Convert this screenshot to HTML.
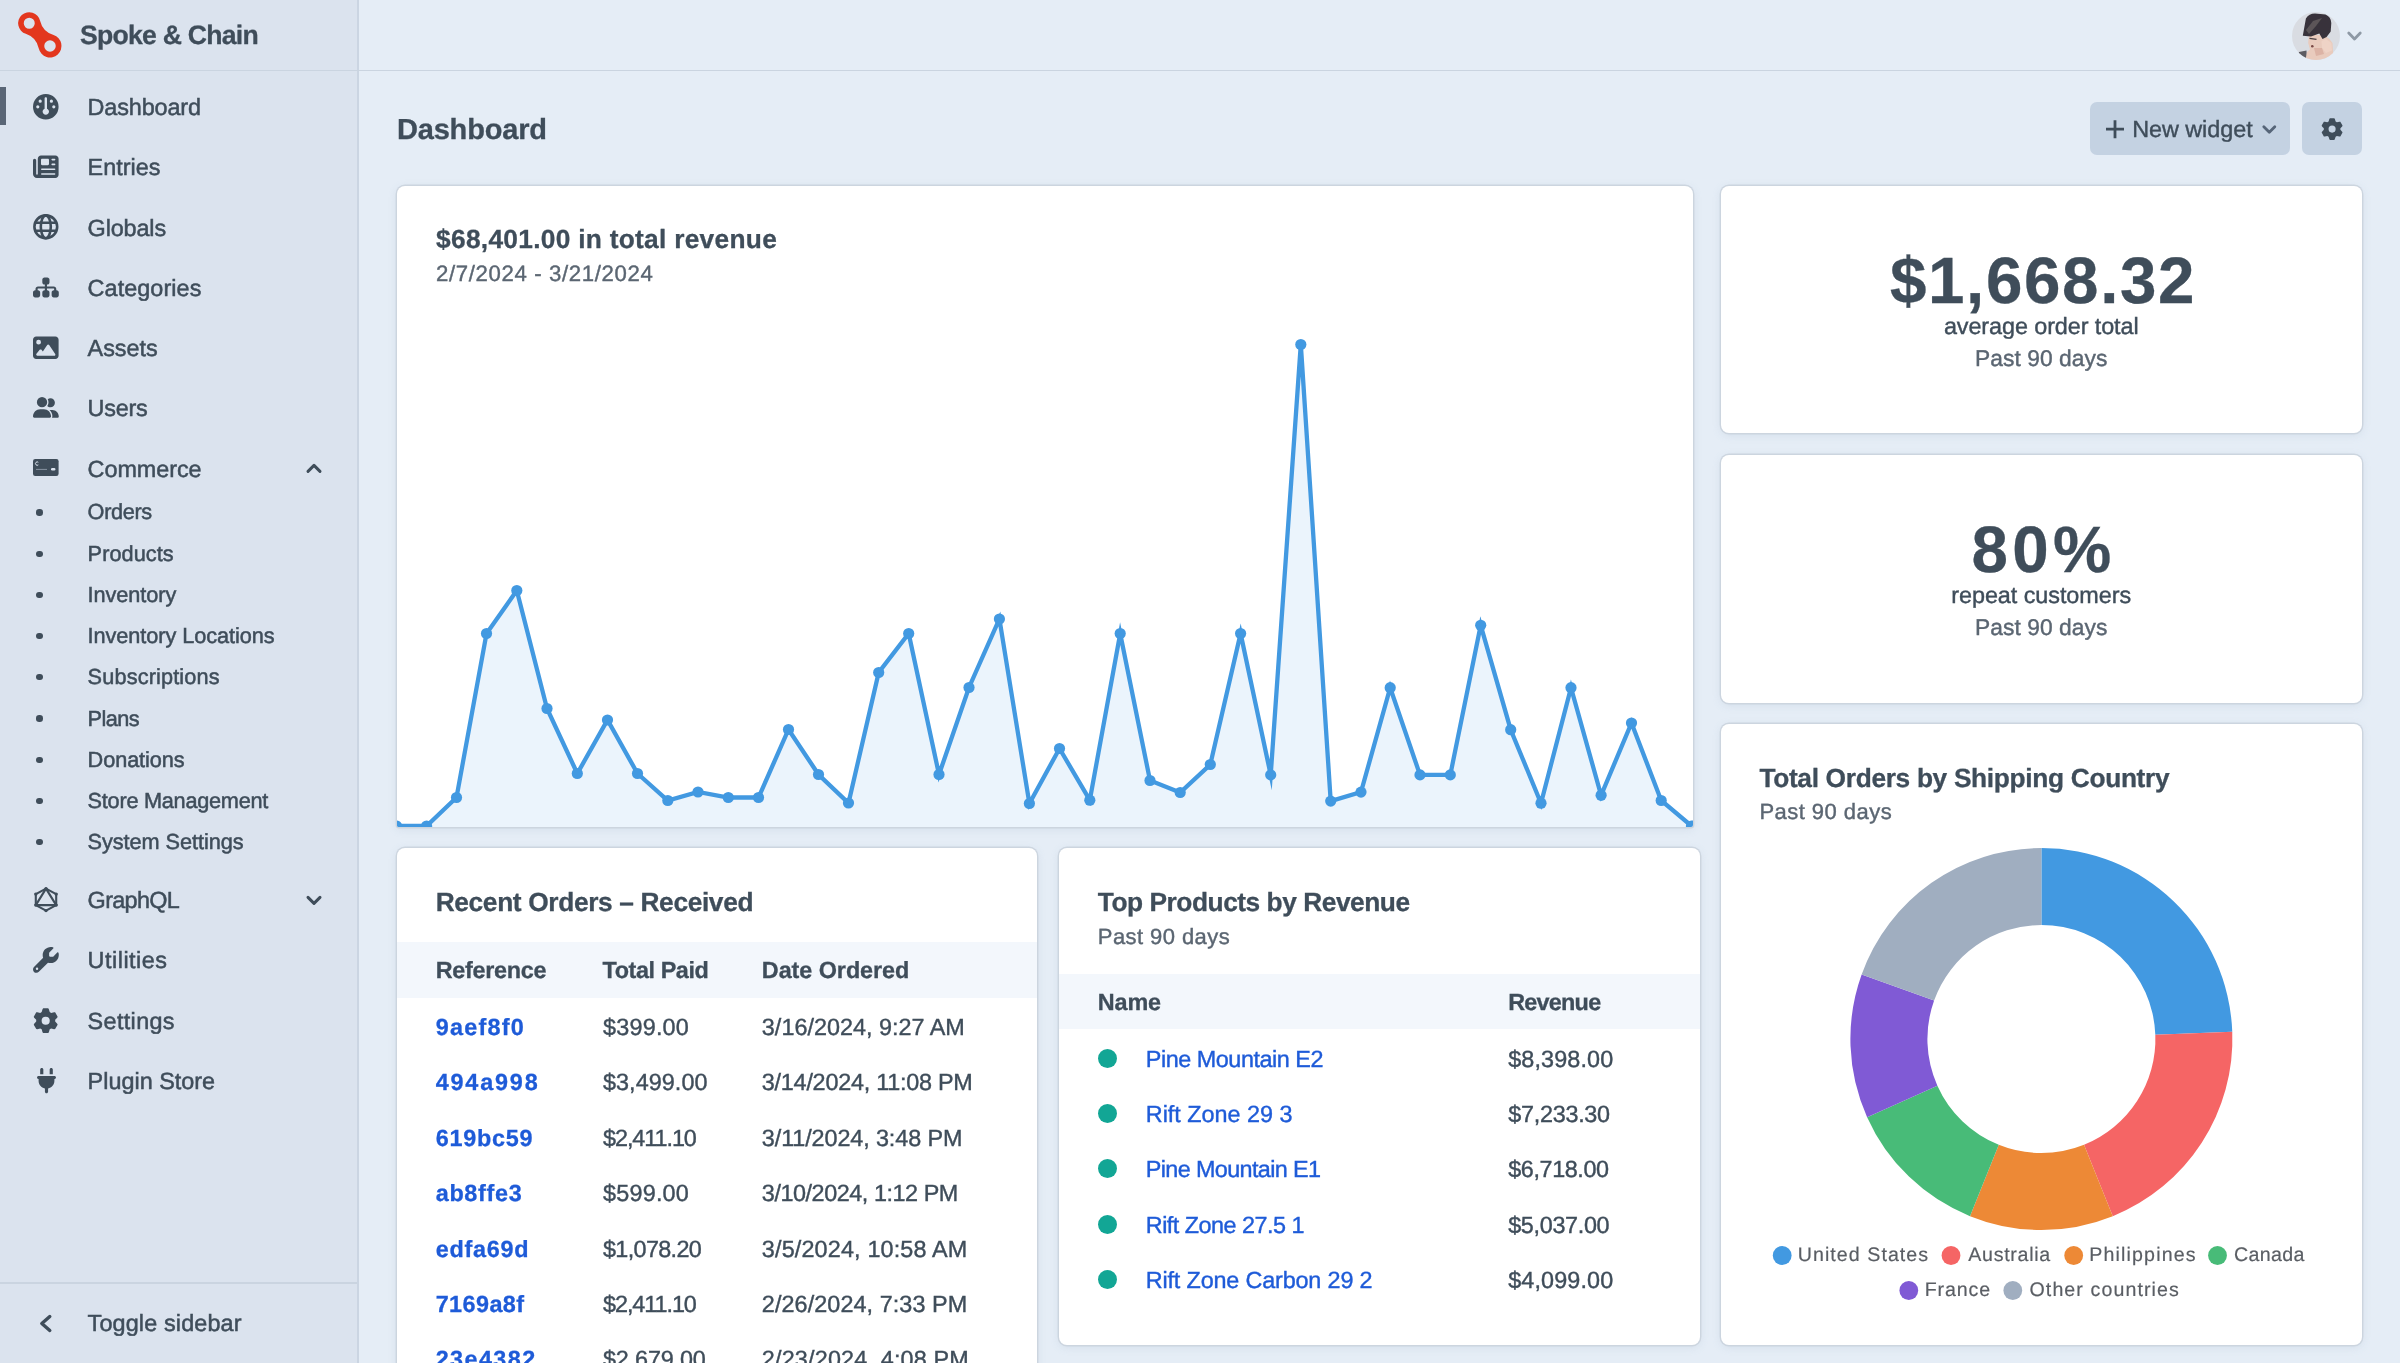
<!DOCTYPE html>
<html><head><meta charset="utf-8"><title>Dashboard - Spoke &amp; Chain</title>
<style>
html,body{margin:0;padding:0}
html{width:2400px;height:1363px;overflow:hidden}
body{width:2400px;height:1363px;overflow:hidden;position:relative;background:#e5edf6;font-family:"Liberation Sans",sans-serif;color:#3f4d5a}
.t{position:absolute;white-space:pre;font-family:"Liberation Sans",sans-serif;text-rendering:geometricPrecision}
.tl{position:absolute;left:0;top:0;width:2400px;height:1363px;will-change:transform}
.sb{position:absolute;left:0;top:0;width:357px;height:1363px;background:#dbe3ee;border-right:2px solid #cbd5e2}
.hl{position:absolute;left:0;top:69.6px;width:2400px;height:1.6px;background:#cad4e0}
.btn{position:absolute;background:#c4d2e2;border-radius:7px}
svg{overflow:visible}
.root{position:absolute;left:0;top:0;width:2400px;height:1363px;overflow:hidden;background:#e5edf6}
</style></head><body>
<div class="root">
<div class="sb"></div>
<div class="hl"></div>
<div style="position:absolute;left:0;top:1282px;width:357px;height:1.6px;background:#cad4e0"></div>
<div style="position:absolute;left:0;top:87.2px;width:6.1px;height:37.8px;background:#5a6676"></div>
<svg style="position:absolute;left:10px;top:0" width="60" height="68" viewBox="10 0 60 68"><path fill="#e3371e" fill-rule="evenodd" d="M25.80 33.80Q36.55 37.43 38.79 48.56A11.5 11.5 0 1 0 53.58 35.07Q42.70 31.82 40.07 20.78A11.1 11.1 0 1 0 25.80 33.80ZM23.75 23.25a5.5 5.5 0 1 0 11 0a5.5 5.5 0 1 0 -11 0ZM44.25 46.0a5.75 5.75 0 1 0 11.5 0a5.75 5.75 0 1 0 -11.5 0Z"/></svg>
<svg style="position:absolute;left:33.20px;top:93.60px" width="25.60" height="25.60" viewBox="0 0 512 512"><path fill="#3f4d5a" fill-rule="nonzero" d="M0 256a256 256 0 1 1 512 0A256 256 0 1 1 0 256zM320 352c0-26.9-16.5-49.9-40-59.3V88c0-13.3-10.7-24-24-24s-24 10.7-24 24V292.700c-23.500 9.500-40 32.500-40 59.300c0 35.300 28.700 64 64 64s64-28.700 64-64zM144 176a32 32 0 1 0 0-64 32 32 0 1 0 0 64zm-16 80a32 32 0 1 0 -64 0 32 32 0 1 0 64 0zm288 32a32 32 0 1 0 0-64 32 32 0 1 0 0 64zM400 144a32 32 0 1 0 -64 0 32 32 0 1 0 64 0z"/></svg><svg style="position:absolute;left:33.20px;top:153.80px" width="25.60" height="25.60" viewBox="0 0 512 512"><path fill="#3f4d5a" fill-rule="nonzero" d="M96 96c0-35.3 28.7-64 64-64H448c35.300 0 64 28.700 64 64V416c0 35.300-28.700 64-64 64H80c-44.200 0-80-35.800-80-80V128c0-17.700 14.300-32 32-32s32 14.300 32 32V400c0 8.800 7.200 16 16 16s16-7.200 16-16V96zm64 24v80c0 13.300 10.700 24 24 24H296c13.300 0 24-10.700 24-24V120c0-13.300-10.700-24-24-24H184c-13.300 0-24 10.700-24 24zm208-8c0 8.800 7.200 16 16 16h48c8.800 0 16-7.200 16-16s-7.200-16-16-16H384c-8.800 0-16 7.200-16 16zm0 96c0 8.800 7.200 16 16 16h48c8.800 0 16-7.200 16-16s-7.200-16-16-16H384c-8.800 0-16 7.200-16 16zM160 304c0 8.800 7.200 16 16 16H432c8.800 0 16-7.200 16-16s-7.200-16-16-16H176c-8.800 0-16 7.200-16 16zm0 96c0 8.800 7.200 16 16 16H432c8.800 0 16-7.200 16-16s-7.200-16-16-16H176c-8.800 0-16 7.200-16 16z"/></svg><svg style="position:absolute;left:33.2px;top:213.89999999999998px" width="25.6" height="25.6" viewBox="0 0 512 512" fill="none" stroke="#3f4d5a" stroke-width="52"><circle cx="256" cy="256" r="228"/><ellipse cx="256" cy="256" rx="100" ry="228"/><path d="M40 176H472M40 336H472"/></svg><svg style="position:absolute;left:33.10px;top:275.83px" width="25.80" height="22.93" viewBox="0 0 576 512"><path fill="#3f4d5a" fill-rule="nonzero" d="M208 80c0-26.500 21.500-48 48-48h64c26.500 0 48 21.500 48 48v64c0 26.500-21.500 48-48 48h-8v40H464c30.900 0 56 25.100 56 56v32h8c26.500 0 48 21.500 48 48v64c0 26.500-21.500 48-48 48H464c-26.500 0-48-21.500-48-48V368c0-26.500 21.500-48 48-48h8V288c0-4.400-3.600-8-8-8H312v40h8c26.500 0 48 21.500 48 48v64c0 26.500-21.500 48-48 48H256c-26.500 0-48-21.500-48-48V368c0-26.500 21.500-48 48-48h8V280H112c-4.400 0-8 3.600-8 8v32h8c26.500 0 48 21.500 48 48v64c0 26.500-21.500 48-48 48H48c-26.500 0-48-21.500-48-48V368c0-26.500 21.500-48 48-48h8V288c0-30.900 25.100-56 56-56H264V192h-8c-26.500 0-48-21.500-48-48V80z"/></svg><svg style="position:absolute;left:33.20px;top:334.60px" width="25.60" height="25.60" viewBox="0 0 512 512"><path fill="#3f4d5a" fill-rule="nonzero" d="M0 96C0 60.700 28.700 32 64 32H448c35.300 0 64 28.700 64 64V416c0 35.300-28.700 64-64 64H64c-35.300 0-64-28.700-64-64V96zM323.800 202.500c-4.500-6.600-11.900-10.500-19.800-10.500s-15.400 3.900-19.800 10.500l-87 127.600L170.700 297c-4.600-5.700-11.500-9-18.700-9s-14.200 3.300-18.700 9l-64 80c-5.800 7.200-6.900 17.100-2.900 25.400s12.400 13.600 21.600 13.600h96 32H424c8.900 0 17.100-4.900 21.200-12.800s3.600-17.400-1.400-24.700l-120-176zM112 192a48 48 0 1 0 0-96 48 48 0 1 0 0 96z"/></svg><svg style="position:absolute;left:33.10px;top:397.28px" width="25.80" height="20.64" viewBox="0 0 640 512"><path fill="#3f4d5a" fill-rule="nonzero" d="M96 128a128 128 0 1 1 256 0A128 128 0 1 1 96 128zM0 482.300C0 383.800 79.800 304 178.300 304h91.400C368.200 304 448 383.800 448 482.300c0 16.400-13.300 29.700-29.700 29.700H29.700C13.300 512 0 498.700 0 482.300zM609.300 512H471.400c5.400-9.400 8.600-20.300 8.600-32v-8c0-60.700-27.100-115.200-69.800-151.800c2.400-.1 4.700-.2 7.100-.2h61.400C567.800 320 640 392.200 640 481.300c0 17-13.800 30.700-30.700 30.700zM432 256c-31 0-59-12.600-79.300-32.900C372.400 196.500 384 163.600 384 128c0-26.800-6.600-52.100-18.300-74.300C384.300 40.100 407.200 32 432 32c61.900 0 112 50.100 112 112s-50.100 112-112 112z"/></svg><svg style="position:absolute;left:33.3px;top:459.4px" width="25.6" height="17" viewBox="0 0 25.6 17"><rect width="25.6" height="17" rx="2.2" fill="#3f4d5a"/><path d="M5.3 3.3a1.7 1.7 0 1 0 0 2.6" fill="none" stroke="#dbe3ee" stroke-width="1"/><rect x="3" y="9.9" width="11" height="1" fill="#8793a0"/><rect x="18" y="8.9" width="4.4" height="2.6" rx="1.2" fill="#dbe3ee"/></svg><svg style="position:absolute;left:0;top:0" width="100" height="1000" viewBox="0 0 100 1000"><g fill="none" stroke="#3f4d5a" stroke-width="2.1" stroke-linejoin="round"><polygon points="46.0,888.6 56.2,894.1 56.2,905.1 46.0,910.6 35.8,905.1 35.8,894.1"/><polygon points="46.0,888.6 56.2,905.1 35.8,905.1"/></g><g fill="#3f4d5a"><circle cx="46.0" cy="888.6" r="1.7"/><circle cx="56.2" cy="894.1" r="1.7"/><circle cx="56.2" cy="905.1" r="1.7"/><circle cx="46.0" cy="910.6" r="1.7"/><circle cx="35.8" cy="905.1" r="1.7"/><circle cx="35.8" cy="894.1" r="1.7"/></g></svg><svg style="position:absolute;left:33.10px;top:947.30px" width="25.80" height="25.80" viewBox="0 0 512 512"><path fill="#3f4d5a" fill-rule="evenodd" d="M352 320c88.4 0 160-71.6 160-160c0-15.3-2.2-30.1-6.200-44.200c-3.100-10.800-16.400-13.200-24.300-5.300l-76.800 76.800c-3 3-7.100 4.700-11.300 4.700H336c-8.800 0-16-7.200-16-16V118.600c0-4.200 1.700-8.300 4.700-11.300l76.800-76.800c7.900-7.900 5.400-21.200-5.300-24.300C382.100 2.200 367.300 0 352 0C263.600 0 192 71.600 192 160c0 19.100 3.400 37.500 9.500 54.500L19.900 396.100C7.200 408.800 0 426.100 0 444.100C0 481.600 30.400 512 67.900 512c18 0 35.300-7.200 48-19.900L297.500 310.500c17 6.200 35.400 9.500 54.500 9.500zM80 408a24 24 0 1 1 0 48 24 24 0 1 1 0-48z"/></svg><svg style="position:absolute;left:33.30px;top:1007.60px" width="25.40" height="25.40" viewBox="0 0 512 512"><path fill="#3f4d5a" fill-rule="evenodd" d="M174.9 82.0 L191.9 24.7 L205.4 7.1 L306.6 7.1 L320.1 24.7 L337.1 82.0 L366.1 98.7 L424.2 84.8 L446.2 87.7 L496.9 175.4 L488.4 195.9 L447.3 239.3 L447.3 272.7 L488.4 316.1 L496.9 336.6 L446.2 424.3 L424.2 427.2 L366.1 413.3 L337.1 430.0 L320.1 487.3 L306.6 504.9 L205.4 504.9 L191.9 487.3 L174.9 430.0 L145.9 413.3 L87.8 427.2 L65.8 424.3 L15.1 336.6 L23.6 316.1 L64.7 272.7 L64.7 239.3 L23.6 195.9 L15.1 175.4 L65.8 87.7 L87.8 84.8 L145.9 98.7Z M174 256a82 82 0 1 0 164 0a82 82 0 1 0 -164 0z"/></svg><svg style="position:absolute;left:36.50px;top:1067.90px" width="19.00" height="25.30" viewBox="0 0 384 512"><path fill="#3f4d5a" fill-rule="nonzero" d="M96 0C78.300 0 64 14.300 64 32v96h64V32c0-17.700-14.300-32-32-32zM288 0c-17.700 0-32 14.300-32 32v96h64V32c0-17.700-14.300-32-32-32zM32 160c-17.700 0-32 14.300-32 32s14.300 32 32 32v32c0 77.400 55 142 128 156.800V480c0 17.700 14.300 32 32 32s32-14.300 32-32V412.800C297 398 352 333.400 352 256V224c17.700 0 32-14.300 32-32s-14.300-32-32-32H32z"/></svg><div style="position:absolute;left:36.4px;top:509.3px;width:6.4px;height:6.4px;border-radius:50%;background:#3f4d5a"></div><div style="position:absolute;left:36.4px;top:550.5px;width:6.4px;height:6.4px;border-radius:50%;background:#3f4d5a"></div><div style="position:absolute;left:36.4px;top:591.7px;width:6.4px;height:6.4px;border-radius:50%;background:#3f4d5a"></div><div style="position:absolute;left:36.4px;top:632.9px;width:6.4px;height:6.4px;border-radius:50%;background:#3f4d5a"></div><div style="position:absolute;left:36.4px;top:674.1px;width:6.4px;height:6.4px;border-radius:50%;background:#3f4d5a"></div><div style="position:absolute;left:36.4px;top:715.3px;width:6.4px;height:6.4px;border-radius:50%;background:#3f4d5a"></div><div style="position:absolute;left:36.4px;top:756.5px;width:6.4px;height:6.4px;border-radius:50%;background:#3f4d5a"></div><div style="position:absolute;left:36.4px;top:797.7px;width:6.4px;height:6.4px;border-radius:50%;background:#3f4d5a"></div><div style="position:absolute;left:36.4px;top:838.9px;width:6.4px;height:6.4px;border-radius:50%;background:#3f4d5a"></div>
<svg style="position:absolute;left:2292px;top:11.5px" width="48" height="48" viewBox="0 0 48 48"><defs><clipPath id="av"><circle cx="24" cy="24" r="24"/></clipPath><filter id="avb" x="-10%" y="-10%" width="120%" height="120%"><feGaussianBlur stdDeviation="0.7"/></filter></defs><g clip-path="url(#av)"><rect width="48" height="48" fill="#d9dce2"/><g filter="url(#avb)"><path d="M7 40L14.500 38.500L15 48H4Z" fill="#5d5c62"/><path d="M16.800 23L16.200 31L18 37.500L15 40L13.500 48H41V40L40.500 31L37 26.500L31 23Z" fill="#e9cbbd"/><path d="M29.500 29L34 27L39.500 31L40 38.500L34 41L30 36Z" fill="#efd3c6"/><path d="M22 36L30 36L32 42L24 44Z" fill="#dcb3a5"/><path d="M10.800 23.700L13.900 6.500Q17 1.600 23 1.500L33.500 2.600Q39 5 39.300 11L38.700 19.500L34.600 25L30.500 27L27.300 21.400L19 24.500Z" fill="#37333a"/><path d="M14 18L21 9L30 6L24 14L17 22Z" fill="#5b5559"/><path d="M17.500 26.300L24.500 27.300" stroke="#4a3f42" stroke-width="1.3" fill="none"/><circle cx="20.300" cy="34.200" r="1.300" fill="#7a4a45"/></g></g></svg>
<div class="btn" style="left:2090px;top:102px;width:200px;height:53px"></div>
<div class="btn" style="left:2302px;top:102px;width:60px;height:53px"></div>
<svg style="position:absolute;left:2320.80px;top:117.90px" width="22.20" height="22.20" viewBox="0 0 512 512"><path fill="#3f4d5a" fill-rule="evenodd" d="M174.9 82.0 L191.9 24.7 L205.4 7.1 L306.6 7.1 L320.1 24.7 L337.1 82.0 L366.1 98.7 L424.2 84.8 L446.2 87.7 L496.9 175.4 L488.4 195.9 L447.3 239.3 L447.3 272.7 L488.4 316.1 L496.9 336.6 L446.2 424.3 L424.2 427.2 L366.1 413.3 L337.1 430.0 L320.1 487.3 L306.6 504.9 L205.4 504.9 L191.9 487.3 L174.9 430.0 L145.9 413.3 L87.8 427.2 L65.8 424.3 L15.1 336.6 L23.6 316.1 L64.7 272.7 L64.7 239.3 L23.6 195.9 L15.1 175.4 L65.8 87.7 L87.8 84.8 L145.9 98.7Z M174 256a82 82 0 1 0 164 0a82 82 0 1 0 -164 0z"/></svg>
<div style="position:absolute;background:#fff;border-radius:8px;box-shadow:0 0 0 1.4px #ccd5df,0 2px 9px rgba(150,170,195,.24);left:397px;top:185.5px;width:1296px;height:641.0px;overflow:hidden;border-radius:8px 8px 2px 2px;"><svg style="position:absolute;left:0;top:0" width="1296" height="641" viewBox="0 0 1296 641"><path d="M-0.5 640.0 L29.6 640.0 L59.5 611.5 L89.5 447.5 L119.8 404.5 L150.0 522.5 L180.3 587.5 L210.5 534.0 L240.5 587.5 L270.8 614.5 L301.0 606.0 L331.3 611.5 L361.5 611.5 L391.5 543.5 L421.5 588.5 L451.5 617.0 L481.7 486.5 L511.7 447.5 L542.0 588.5 L572.0 501.5 L602.4 433.0 L632.4 617.5 L662.5 562.5 L692.8 614.2 L723.2 447.5 L753.0 594.5 L783.2 606.5 L813.3 578.5 L843.6 447.5 L873.7 588.9 L903.8 158.5 L933.7 615.1 L964.0 606.1 L993.2 501.7 L1023.0 588.9 L1053.3 588.9 L1083.7 439.3 L1113.7 543.7 L1144.0 617.2 L1174.0 501.7 L1204.1 609.3 L1234.5 537.0 L1264.2 614.5 L1294.5 640.0 L1294.5 641 L-0.5 641Z" fill="#ebf4fc"/><path d="M-0.5 640.0 L29.6 640.0 L59.5 611.5 L89.5 447.5 L119.8 404.5 L150.0 522.5 L180.3 587.5 L210.5 534.0 L240.5 587.5 L270.8 614.5 L301.0 606.0 L331.3 611.5 L361.5 611.5 L391.5 543.5 L421.5 588.5 L451.5 617.0 L481.7 486.5 L511.7 447.5 L542.0 588.5 L572.0 501.5 L602.4 433.0 L632.4 617.5 L662.5 562.5 L692.8 614.2 L723.2 447.5 L753.0 594.5 L783.2 606.5 L813.3 578.5 L843.6 447.5 L873.7 588.9 L903.8 158.5 L933.7 615.1 L964.0 606.1 L993.2 501.7 L1023.0 588.9 L1053.3 588.9 L1083.7 439.3 L1113.7 543.7 L1144.0 617.2 L1174.0 501.7 L1204.1 609.3 L1234.5 537.0 L1264.2 614.5 L1294.5 640.0" fill="none" stroke="#4299e1" stroke-width="4.3" stroke-linejoin="miter" stroke-miterlimit="10"/><g fill="#4299e1"><circle cx="-0.5" cy="640.0" r="5.6"/><circle cx="29.6" cy="640.0" r="5.6"/><circle cx="59.5" cy="611.5" r="5.6"/><circle cx="89.5" cy="447.5" r="5.6"/><circle cx="119.8" cy="404.5" r="5.6"/><circle cx="150.0" cy="522.5" r="5.6"/><circle cx="180.3" cy="587.5" r="5.6"/><circle cx="210.5" cy="534.0" r="5.6"/><circle cx="240.5" cy="587.5" r="5.6"/><circle cx="270.8" cy="614.5" r="5.6"/><circle cx="301.0" cy="606.0" r="5.6"/><circle cx="331.3" cy="611.5" r="5.6"/><circle cx="361.5" cy="611.5" r="5.6"/><circle cx="391.5" cy="543.5" r="5.6"/><circle cx="421.5" cy="588.5" r="5.6"/><circle cx="451.5" cy="617.0" r="5.6"/><circle cx="481.7" cy="486.5" r="5.6"/><circle cx="511.7" cy="447.5" r="5.6"/><circle cx="542.0" cy="588.5" r="5.6"/><circle cx="572.0" cy="501.5" r="5.6"/><circle cx="602.4" cy="433.0" r="5.6"/><circle cx="632.4" cy="617.5" r="5.6"/><circle cx="662.5" cy="562.5" r="5.6"/><circle cx="692.8" cy="614.2" r="5.6"/><circle cx="723.2" cy="447.5" r="5.6"/><circle cx="753.0" cy="594.5" r="5.6"/><circle cx="783.2" cy="606.5" r="5.6"/><circle cx="813.3" cy="578.5" r="5.6"/><circle cx="843.6" cy="447.5" r="5.6"/><circle cx="873.7" cy="588.9" r="5.6"/><circle cx="903.8" cy="158.5" r="5.6"/><circle cx="933.7" cy="615.1" r="5.6"/><circle cx="964.0" cy="606.1" r="5.6"/><circle cx="993.2" cy="501.7" r="5.6"/><circle cx="1023.0" cy="588.9" r="5.6"/><circle cx="1053.3" cy="588.9" r="5.6"/><circle cx="1083.7" cy="439.3" r="5.6"/><circle cx="1113.7" cy="543.7" r="5.6"/><circle cx="1144.0" cy="617.2" r="5.6"/><circle cx="1174.0" cy="501.7" r="5.6"/><circle cx="1204.1" cy="609.3" r="5.6"/><circle cx="1234.5" cy="537.0" r="5.6"/><circle cx="1264.2" cy="614.5" r="5.6"/><circle cx="1294.5" cy="640.0" r="5.6"/></g></svg></div>
<div style="position:absolute;background:#fff;border-radius:8px;box-shadow:0 0 0 1.4px #ccd5df,0 2px 9px rgba(150,170,195,.24);left:1721px;top:185.5px;width:641px;height:247.7px;"></div>
<div style="position:absolute;background:#fff;border-radius:8px;box-shadow:0 0 0 1.4px #ccd5df,0 2px 9px rgba(150,170,195,.24);left:1721px;top:455px;width:641px;height:248.20000000000005px;"></div>
<div style="position:absolute;background:#fff;border-radius:8px;box-shadow:0 0 0 1.4px #ccd5df,0 2px 9px rgba(150,170,195,.24);left:1721px;top:724px;width:641px;height:620.8px;"></div>
<div style="position:absolute;background:#fff;border-radius:8px;box-shadow:0 0 0 1.4px #ccd5df,0 2px 9px rgba(150,170,195,.24);left:397px;top:848.4px;width:640.3px;height:551.6px;"><div style="position:absolute;left:0;top:93.4px;width:100%;height:55.8px;background:#f3f7fc"></div></div>
<div style="position:absolute;background:#fff;border-radius:8px;box-shadow:0 0 0 1.4px #ccd5df,0 2px 9px rgba(150,170,195,.24);left:1059px;top:848.4px;width:641.4000000000001px;height:496.4px;"><div style="position:absolute;left:0;top:125.8px;width:100%;height:55px;background:#f3f7fc"></div></div>
<svg style="position:absolute;left:1721px;top:724px" width="641" height="620" viewBox="1721 724 641 620"><path fill="#4299e1" d="M2041.40 848.00A191 191 0 0 1 2232.26 1031.68L2155.32 1034.63A114 114 0 0 0 2041.40 925.00Z"/><path fill="#f56565" d="M2232.26 1031.68A191 191 0 0 1 2112.80 1216.15L2084.02 1144.74A114 114 0 0 0 2155.32 1034.63Z"/><path fill="#ed8936" d="M2112.80 1216.15A191 191 0 0 1 1970.00 1216.15L1998.78 1144.74A114 114 0 0 0 2084.02 1144.74Z"/><path fill="#48bb78" d="M1970.00 1216.15A191 191 0 0 1 1867.11 1117.13L1937.37 1085.63A114 114 0 0 0 1998.78 1144.74Z"/><path fill="#805ad5" d="M1867.11 1117.13A191 191 0 0 1 1861.64 974.44L1934.11 1000.47A114 114 0 0 0 1937.37 1085.63Z"/><path fill="#a0aec0" d="M1861.64 974.44A191 191 0 0 1 2041.40 848.00L2041.40 925.00A114 114 0 0 0 1934.11 1000.47Z"/><circle cx="1782.2" cy="1255.5" r="9.4" fill="#4299e1"/><circle cx="1951" cy="1255.5" r="9.4" fill="#f56565"/><circle cx="2073.7" cy="1255.5" r="9.4" fill="#ed8936"/><circle cx="2217.5" cy="1255.5" r="9.4" fill="#48bb78"/><circle cx="1908.8" cy="1290.5" r="9.4" fill="#805ad5"/><circle cx="2012.8" cy="1290.5" r="9.4" fill="#a0aec0"/></svg>
<div style="position:absolute;left:1097.8px;top:1048.7px;width:19px;height:19px;border-radius:50%;background:#12a695"></div><div style="position:absolute;left:1097.8px;top:1104.0px;width:19px;height:19px;border-radius:50%;background:#12a695"></div><div style="position:absolute;left:1097.8px;top:1159.3px;width:19px;height:19px;border-radius:50%;background:#12a695"></div><div style="position:absolute;left:1097.8px;top:1214.6px;width:19px;height:19px;border-radius:50%;background:#12a695"></div><div style="position:absolute;left:1097.8px;top:1269.9px;width:19px;height:19px;border-radius:50%;background:#12a695"></div>
<svg style="position:absolute;left:0;top:0" width="2400" height="1363" viewBox="0 0 2400 1363"><path d="M308.0 471.4L314 465.4L320.0 471.4" fill="none" stroke="#3f4d5a" stroke-width="3.0" stroke-linecap="round" stroke-linejoin="round"/><path d="M308.0 897.4L314 903.4L320.0 897.4" fill="none" stroke="#3f4d5a" stroke-width="3.0" stroke-linecap="round" stroke-linejoin="round"/><path d="M49.8 1316.5L41.8 1323.5L49.8 1330.5" fill="none" stroke="#3f4d5a" stroke-width="3.4" stroke-linecap="round" stroke-linejoin="round"/><path d="M2348.75 33.0L2354.5 39.0L2360.25 33.0" fill="none" stroke="#8e99a5" stroke-width="2.8" stroke-linecap="round" stroke-linejoin="round"/><path d="M2263.8 126.85L2269.3 132.35L2274.8 126.85" fill="none" stroke="#566578" stroke-width="2.8" stroke-linecap="round" stroke-linejoin="round"/><path d="M2106 129.2H2124M2115 120.2V138.2" stroke="#3f4d5a" stroke-width="2.8" fill="none"/></svg>
<div class="tl"><span class="t" style="left:79.95px;top:22.20px;font-size:26.6px;line-height:26.6px;letter-spacing:-0.748px;color:#3f4d5a;font-weight:700;-webkit-text-stroke:0.3px currentColor">Spoke &amp; Chain</span><span class="t" style="left:87.61px;top:96.00px;font-size:23.4px;line-height:23.4px;letter-spacing:-0.130px;color:#3f4d5a;-webkit-text-stroke:0.5px currentColor">Dashboard</span><span class="t" style="left:87.61px;top:156.25px;font-size:23.4px;line-height:23.4px;letter-spacing:0.027px;color:#3f4d5a;-webkit-text-stroke:0.5px currentColor">Entries</span><span class="t" style="left:87.61px;top:216.50px;font-size:23.4px;line-height:23.4px;letter-spacing:-0.140px;color:#3f4d5a;-webkit-text-stroke:0.5px currentColor">Globals</span><span class="t" style="left:87.61px;top:276.75px;font-size:23.4px;line-height:23.4px;letter-spacing:0.067px;color:#3f4d5a;-webkit-text-stroke:0.5px currentColor">Categories</span><span class="t" style="left:87.61px;top:336.60px;font-size:23.4px;line-height:23.4px;letter-spacing:-0.022px;color:#3f4d5a;-webkit-text-stroke:0.5px currentColor">Assets</span><span class="t" style="left:87.61px;top:397.00px;font-size:23.4px;line-height:23.4px;letter-spacing:-0.250px;color:#3f4d5a;-webkit-text-stroke:0.5px currentColor">Users</span><span class="t" style="left:87.61px;top:457.60px;font-size:23.4px;line-height:23.4px;letter-spacing:-0.057px;color:#3f4d5a;-webkit-text-stroke:0.5px currentColor">Commerce</span><span class="t" style="left:87.61px;top:501.40px;font-size:21.7px;line-height:21.7px;letter-spacing:-0.337px;color:#3f4d5a;-webkit-text-stroke:0.5px currentColor">Orders</span><span class="t" style="left:87.61px;top:542.65px;font-size:21.7px;line-height:21.7px;letter-spacing:0.054px;color:#3f4d5a;-webkit-text-stroke:0.5px currentColor">Products</span><span class="t" style="left:87.61px;top:583.90px;font-size:21.7px;line-height:21.7px;letter-spacing:-0.073px;color:#3f4d5a;-webkit-text-stroke:0.5px currentColor">Inventory</span><span class="t" style="left:87.61px;top:625.15px;font-size:21.7px;line-height:21.7px;letter-spacing:-0.061px;color:#3f4d5a;-webkit-text-stroke:0.5px currentColor">Inventory Locations</span><span class="t" style="left:87.61px;top:666.40px;font-size:21.7px;line-height:21.7px;letter-spacing:0.148px;color:#3f4d5a;-webkit-text-stroke:0.5px currentColor">Subscriptions</span><span class="t" style="left:87.61px;top:707.65px;font-size:21.7px;line-height:21.7px;letter-spacing:-0.573px;color:#3f4d5a;-webkit-text-stroke:0.5px currentColor">Plans</span><span class="t" style="left:87.61px;top:748.90px;font-size:21.7px;line-height:21.7px;letter-spacing:-0.087px;color:#3f4d5a;-webkit-text-stroke:0.5px currentColor">Donations</span><span class="t" style="left:87.61px;top:790.15px;font-size:21.7px;line-height:21.7px;letter-spacing:-0.252px;color:#3f4d5a;-webkit-text-stroke:0.5px currentColor">Store Management</span><span class="t" style="left:87.61px;top:831.40px;font-size:21.7px;line-height:21.7px;letter-spacing:-0.052px;color:#3f4d5a;-webkit-text-stroke:0.5px currentColor">System Settings</span><span class="t" style="left:87.61px;top:888.80px;font-size:23.4px;line-height:23.4px;letter-spacing:-0.674px;color:#3f4d5a;-webkit-text-stroke:0.5px currentColor">GraphQL</span><span class="t" style="left:87.61px;top:949.40px;font-size:23.4px;line-height:23.4px;letter-spacing:0.506px;color:#3f4d5a;-webkit-text-stroke:0.5px currentColor">Utilities</span><span class="t" style="left:87.61px;top:1009.80px;font-size:23.4px;line-height:23.4px;letter-spacing:0.349px;color:#3f4d5a;-webkit-text-stroke:0.5px currentColor">Settings</span><span class="t" style="left:87.61px;top:1069.90px;font-size:23.4px;line-height:23.4px;letter-spacing:0.003px;color:#3f4d5a;-webkit-text-stroke:0.5px currentColor">Plugin Store</span><span class="t" style="left:87.61px;top:1312.25px;font-size:23.4px;line-height:23.4px;letter-spacing:0.136px;color:#3f4d5a;-webkit-text-stroke:0.5px currentColor">Toggle sidebar</span><span class="t" style="left:396.94px;top:116.25px;font-size:29.0px;line-height:29.0px;letter-spacing:-0.178px;color:#3f4d5a;font-weight:700;-webkit-text-stroke:0.3px currentColor">Dashboard</span><span class="t" style="left:2132.15px;top:118.00px;font-size:23.4px;line-height:23.4px;letter-spacing:-0.042px;color:#3f4d5a;-webkit-text-stroke:0.4px currentColor">New widget</span><span class="t" style="left:436.08px;top:226.30px;font-size:26.3px;line-height:26.3px;letter-spacing:0.285px;color:#3f4d5a;font-weight:700;-webkit-text-stroke:0.3px currentColor">$68,401.00 in total revenue</span><span class="t" style="left:436.08px;top:262.70px;font-size:22.2px;line-height:22.2px;letter-spacing:0.628px;color:#5b6672;-webkit-text-stroke:0.4px currentColor">2/7/2024 - 3/21/2024</span><span class="t" style="left:1889.95px;top:247.75px;font-size:65.5px;line-height:65.5px;letter-spacing:1.642px;color:#3f4d5a;font-weight:700;-webkit-text-stroke:0.3px currentColor">$1,668.32</span><span class="t" style="left:1943.95px;top:314.50px;font-size:23.4px;line-height:23.4px;letter-spacing:-0.094px;color:#3f4d5a;-webkit-text-stroke:0.4px currentColor">average order total</span><span class="t" style="left:1974.94px;top:346.75px;font-size:22.8px;line-height:22.8px;letter-spacing:0.068px;color:#5b6672;-webkit-text-stroke:0.4px currentColor">Past 90 days</span><span class="t" style="left:1971.40px;top:517.35px;font-size:65.5px;line-height:65.5px;letter-spacing:4.325px;color:#3f4d5a;font-weight:700;-webkit-text-stroke:0.3px currentColor">80%</span><span class="t" style="left:1951.28px;top:584.10px;font-size:23.4px;line-height:23.4px;letter-spacing:-0.056px;color:#3f4d5a;-webkit-text-stroke:0.4px currentColor">repeat customers</span><span class="t" style="left:1974.94px;top:616.35px;font-size:22.8px;line-height:22.8px;letter-spacing:0.068px;color:#5b6672;-webkit-text-stroke:0.4px currentColor">Past 90 days</span><span class="t" style="left:1759.40px;top:801.20px;font-size:22.0px;line-height:22.0px;letter-spacing:0.467px;color:#5b6672;-webkit-text-stroke:0.4px currentColor">Past 90 days</span><span class="t" style="left:1759.40px;top:764.70px;font-size:26.3px;line-height:26.3px;letter-spacing:-0.325px;color:#3f4d5a;font-weight:700;-webkit-text-stroke:0.3px currentColor">Total Orders by Shipping Country</span><span class="t" style="left:1797.78px;top:1246.30px;font-size:19.6px;line-height:19.6px;letter-spacing:1.061px;color:#5a5e64;-webkit-text-stroke:0.2px currentColor">United States</span><span class="t" style="left:1968.34px;top:1246.30px;font-size:19.6px;line-height:19.6px;letter-spacing:0.709px;color:#5a5e64;-webkit-text-stroke:0.2px currentColor">Australia</span><span class="t" style="left:2089.28px;top:1246.30px;font-size:19.6px;line-height:19.6px;letter-spacing:1.149px;color:#5a5e64;-webkit-text-stroke:0.2px currentColor">Philippines</span><span class="t" style="left:2234.12px;top:1246.30px;font-size:19.6px;line-height:19.6px;letter-spacing:0.337px;color:#5a5e64;-webkit-text-stroke:0.2px currentColor">Canada</span><span class="t" style="left:1924.70px;top:1281.10px;font-size:19.6px;line-height:19.6px;letter-spacing:0.899px;color:#5a5e64;-webkit-text-stroke:0.2px currentColor">France</span><span class="t" style="left:2029.50px;top:1281.10px;font-size:19.6px;line-height:19.6px;letter-spacing:1.096px;color:#5a5e64;-webkit-text-stroke:0.2px currentColor">Other countries</span><span class="t" style="left:435.70px;top:958.80px;font-size:23.4px;line-height:23.4px;letter-spacing:-0.278px;color:#3f4d5a;font-weight:700;-webkit-text-stroke:0.3px currentColor">Reference</span><span class="t" style="left:435.70px;top:889.40px;font-size:26.3px;line-height:26.3px;letter-spacing:-0.355px;color:#3f4d5a;font-weight:700;-webkit-text-stroke:0.3px currentColor">Recent Orders – Received</span><span class="t" style="left:602.50px;top:958.80px;font-size:23.4px;line-height:23.4px;letter-spacing:-0.415px;color:#3f4d5a;font-weight:700;-webkit-text-stroke:0.3px currentColor">Total Paid</span><span class="t" style="left:761.86px;top:958.80px;font-size:23.4px;line-height:23.4px;letter-spacing:-0.068px;color:#3f4d5a;font-weight:700;-webkit-text-stroke:0.3px currentColor">Date Ordered</span><span class="t" style="left:435.70px;top:1016.00px;font-size:23.4px;line-height:23.4px;letter-spacing:1.226px;color:#1e5bd8;font-weight:700;-webkit-text-stroke:0.3px currentColor">9aef8f0</span><span class="t" style="left:603.00px;top:1016.00px;font-size:23.4px;line-height:23.4px;letter-spacing:0.213px;color:#3f4d5a;-webkit-text-stroke:0.4px currentColor">$399.00</span><span class="t" style="left:761.86px;top:1016.00px;font-size:23.4px;line-height:23.4px;letter-spacing:0.005px;color:#3f4d5a;-webkit-text-stroke:0.4px currentColor">3/16/2024, 9:27 AM</span><span class="t" style="left:435.70px;top:1071.40px;font-size:23.4px;line-height:23.4px;letter-spacing:1.826px;color:#1e5bd8;font-weight:700;-webkit-text-stroke:0.3px currentColor">494a998</span><span class="t" style="left:603.00px;top:1071.40px;font-size:23.4px;line-height:23.4px;letter-spacing:0.050px;color:#3f4d5a;-webkit-text-stroke:0.4px currentColor">$3,499.00</span><span class="t" style="left:761.86px;top:1071.40px;font-size:23.4px;line-height:23.4px;letter-spacing:-0.252px;color:#3f4d5a;-webkit-text-stroke:0.4px currentColor">3/14/2024, 11:08 PM</span><span class="t" style="left:435.70px;top:1126.80px;font-size:23.4px;line-height:23.4px;letter-spacing:0.766px;color:#1e5bd8;font-weight:700;-webkit-text-stroke:0.3px currentColor">619bc59</span><span class="t" style="left:603.00px;top:1126.80px;font-size:23.4px;line-height:23.4px;letter-spacing:-1.061px;color:#3f4d5a;-webkit-text-stroke:0.4px currentColor">$2,411.10</span><span class="t" style="left:761.86px;top:1126.80px;font-size:23.4px;line-height:23.4px;letter-spacing:-0.112px;color:#3f4d5a;-webkit-text-stroke:0.4px currentColor">3/11/2024, 3:48 PM</span><span class="t" style="left:435.70px;top:1182.20px;font-size:23.4px;line-height:23.4px;letter-spacing:0.692px;color:#1e5bd8;font-weight:700;-webkit-text-stroke:0.3px currentColor">ab8ffe3</span><span class="t" style="left:603.00px;top:1182.20px;font-size:23.4px;line-height:23.4px;letter-spacing:0.213px;color:#3f4d5a;-webkit-text-stroke:0.4px currentColor">$599.00</span><span class="t" style="left:761.86px;top:1182.20px;font-size:23.4px;line-height:23.4px;letter-spacing:-0.456px;color:#3f4d5a;-webkit-text-stroke:0.4px currentColor">3/10/2024, 1:12 PM</span><span class="t" style="left:435.70px;top:1237.60px;font-size:23.4px;line-height:23.4px;letter-spacing:0.722px;color:#1e5bd8;font-weight:700;-webkit-text-stroke:0.3px currentColor">edfa69d</span><span class="t" style="left:603.00px;top:1237.60px;font-size:23.4px;line-height:23.4px;letter-spacing:-0.653px;color:#3f4d5a;-webkit-text-stroke:0.4px currentColor">$1,078.20</span><span class="t" style="left:761.86px;top:1237.60px;font-size:23.4px;line-height:23.4px;letter-spacing:0.147px;color:#3f4d5a;-webkit-text-stroke:0.4px currentColor">3/5/2024, 10:58 AM</span><span class="t" style="left:435.70px;top:1293.00px;font-size:23.4px;line-height:23.4px;letter-spacing:0.416px;color:#1e5bd8;font-weight:700;-webkit-text-stroke:0.3px currentColor">7169a8f</span><span class="t" style="left:603.00px;top:1293.00px;font-size:23.4px;line-height:23.4px;letter-spacing:-1.061px;color:#3f4d5a;-webkit-text-stroke:0.4px currentColor">$2,411.10</span><span class="t" style="left:761.86px;top:1293.00px;font-size:23.4px;line-height:23.4px;letter-spacing:0.071px;color:#3f4d5a;-webkit-text-stroke:0.4px currentColor">2/26/2024, 7:33 PM</span><span class="t" style="left:435.70px;top:1348.40px;font-size:23.4px;line-height:23.4px;letter-spacing:1.403px;color:#1e5bd8;font-weight:700;-webkit-text-stroke:0.3px currentColor">23e4382</span><span class="t" style="left:603.00px;top:1348.40px;font-size:23.4px;line-height:23.4px;letter-spacing:-0.148px;color:#3f4d5a;-webkit-text-stroke:0.4px currentColor">$2,679.00</span><span class="t" style="left:761.86px;top:1348.40px;font-size:23.4px;line-height:23.4px;letter-spacing:0.164px;color:#3f4d5a;-webkit-text-stroke:0.4px currentColor">2/23/2024, 4:08 PM</span><span class="t" style="left:1097.82px;top:925.80px;font-size:22.0px;line-height:22.0px;letter-spacing:0.423px;color:#5b6672;-webkit-text-stroke:0.4px currentColor">Past 90 days</span><span class="t" style="left:1097.82px;top:889.40px;font-size:26.3px;line-height:26.3px;letter-spacing:-0.464px;color:#3f4d5a;font-weight:700;-webkit-text-stroke:0.3px currentColor">Top Products by Revenue</span><span class="t" style="left:1097.82px;top:990.90px;font-size:23.4px;line-height:23.4px;letter-spacing:-0.165px;color:#3f4d5a;font-weight:700;-webkit-text-stroke:0.3px currentColor">Name</span><span class="t" style="left:1508.20px;top:990.80px;font-size:23.4px;line-height:23.4px;letter-spacing:-0.756px;color:#3f4d5a;font-weight:700;-webkit-text-stroke:0.3px currentColor">Revenue</span><span class="t" style="left:1145.78px;top:1047.80px;font-size:23.4px;line-height:23.4px;letter-spacing:-0.460px;color:#1e5bd8;-webkit-text-stroke:0.4px currentColor">Pine Mountain E2</span><span class="t" style="left:1508.20px;top:1047.80px;font-size:23.4px;line-height:23.4px;letter-spacing:0.120px;color:#3f4d5a;-webkit-text-stroke:0.4px currentColor">$8,398.00</span><span class="t" style="left:1145.78px;top:1103.10px;font-size:23.4px;line-height:23.4px;letter-spacing:-0.020px;color:#1e5bd8;-webkit-text-stroke:0.4px currentColor">Rift Zone 29 3</span><span class="t" style="left:1508.20px;top:1103.10px;font-size:23.4px;line-height:23.4px;letter-spacing:-0.265px;color:#3f4d5a;-webkit-text-stroke:0.4px currentColor">$7,233.30</span><span class="t" style="left:1145.78px;top:1158.40px;font-size:23.4px;line-height:23.4px;letter-spacing:-0.629px;color:#1e5bd8;-webkit-text-stroke:0.4px currentColor">Pine Mountain E1</span><span class="t" style="left:1508.20px;top:1158.40px;font-size:23.4px;line-height:23.4px;letter-spacing:-0.395px;color:#3f4d5a;-webkit-text-stroke:0.4px currentColor">$6,718.00</span><span class="t" style="left:1145.78px;top:1213.70px;font-size:23.4px;line-height:23.4px;letter-spacing:-0.515px;color:#1e5bd8;-webkit-text-stroke:0.4px currentColor">Rift Zone 27.5 1</span><span class="t" style="left:1508.20px;top:1213.70px;font-size:23.4px;line-height:23.4px;letter-spacing:-0.328px;color:#3f4d5a;-webkit-text-stroke:0.4px currentColor">$5,037.00</span><span class="t" style="left:1145.78px;top:1269.00px;font-size:23.4px;line-height:23.4px;letter-spacing:-0.167px;color:#1e5bd8;-webkit-text-stroke:0.4px currentColor">Rift Zone Carbon 29 2</span><span class="t" style="left:1508.20px;top:1269.00px;font-size:23.4px;line-height:23.4px;letter-spacing:0.120px;color:#3f4d5a;-webkit-text-stroke:0.4px currentColor">$4,099.00</span></div>
</div>
</body></html>
